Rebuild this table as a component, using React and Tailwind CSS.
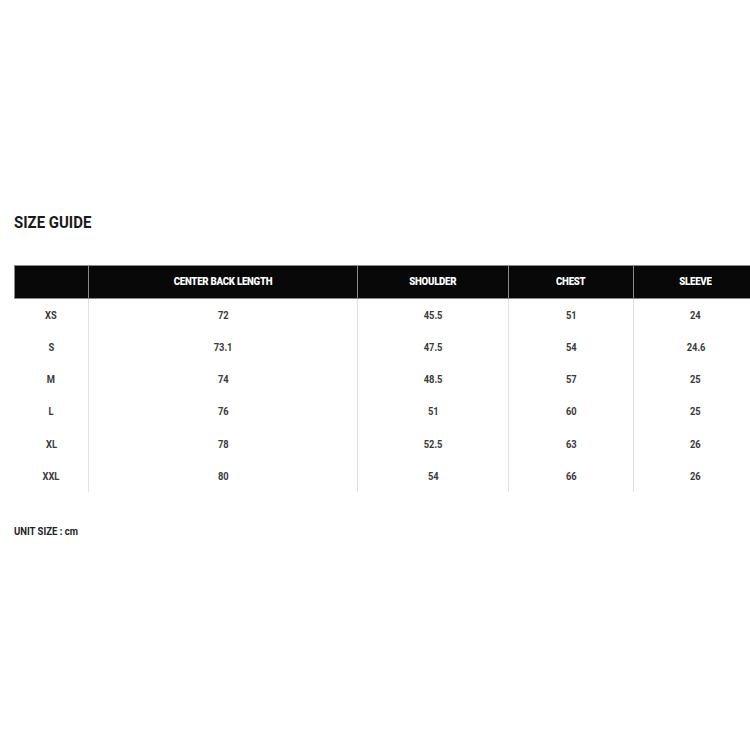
import React from 'react';

const columns = ['', 'CENTER BACK LENGTH', 'SHOULDER', 'CHEST', 'SLEEVE'];

const rows = [
  ['XS', '72', '45.5', '51', '24'],
  ['S', '73.1', '47.5', '54', '24.6'],
  ['M', '74', '48.5', '57', '25'],
  ['L', '76', '51', '60', '25'],
  ['XL', '78', '52.5', '63', '26'],
  ['XXL', '80', '54', '66', '26'],
];

// no condensed face installed, so narrow Roboto a bit
const font = { fontFamily: '"Liberation Sans Narrow", "Roboto", sans-serif' };

const App = () => {
  return (
    <div className="w-[750px] h-[750px] bg-white overflow-hidden" style={font}>
      <div className="pt-[212px] pl-[14px]">
        <h2 className="text-[17px] leading-[20px] font-bold text-[#1a1a1a]">
          <span className="inline-block origin-left scale-x-[0.88]">SIZE GUIDE</span>
        </h2>

        <table className="mt-[33px] table-fixed border-collapse w-[743px] min-w-[743px]">
          <colgroup>
            <col className="w-[74px]" />
            <col className="w-[269px]" />
            <col className="w-[151px]" />
            <col className="w-[125px]" />
            <col className="w-[124px]" />
          </colgroup>
          <thead>
            <tr className="h-[33px] bg-[#080808]">
              {columns.map((c, i) => (
                <th
                  key={i}
                  className="border border-[#8a8a8a] text-white text-[11px] font-black tracking-[-0.3px] text-center align-middle p-0"
                >
                  <span className="inline-block scale-x-[0.88]">{c}</span>
                </th>
              ))}
            </tr>
          </thead>
          <tbody>
            {rows.map((r) => (
              <tr key={r[0]} className="h-[32.3px]">
                {r.map((v, i) => (
                  <td
                    key={i}
                    className={`text-center align-middle p-0 pt-[2px] text-[11px] font-bold text-[#3a3a3a] ${
                      i > 0 ? 'border-l border-[#e2e2e2]' : ''
                    }`}
                  >
                    <span className="inline-block scale-x-[0.85]">{v}</span>
                  </td>
                ))}
              </tr>
            ))}
          </tbody>
        </table>

        <p className="mt-[34px] text-[10px] leading-[12px] font-bold text-[#222]">
          <span className="inline-block origin-left scale-x-[0.95]">UNIT SIZE : cm</span>
        </p>
      </div>
    </div>
  );
};

export default App;
